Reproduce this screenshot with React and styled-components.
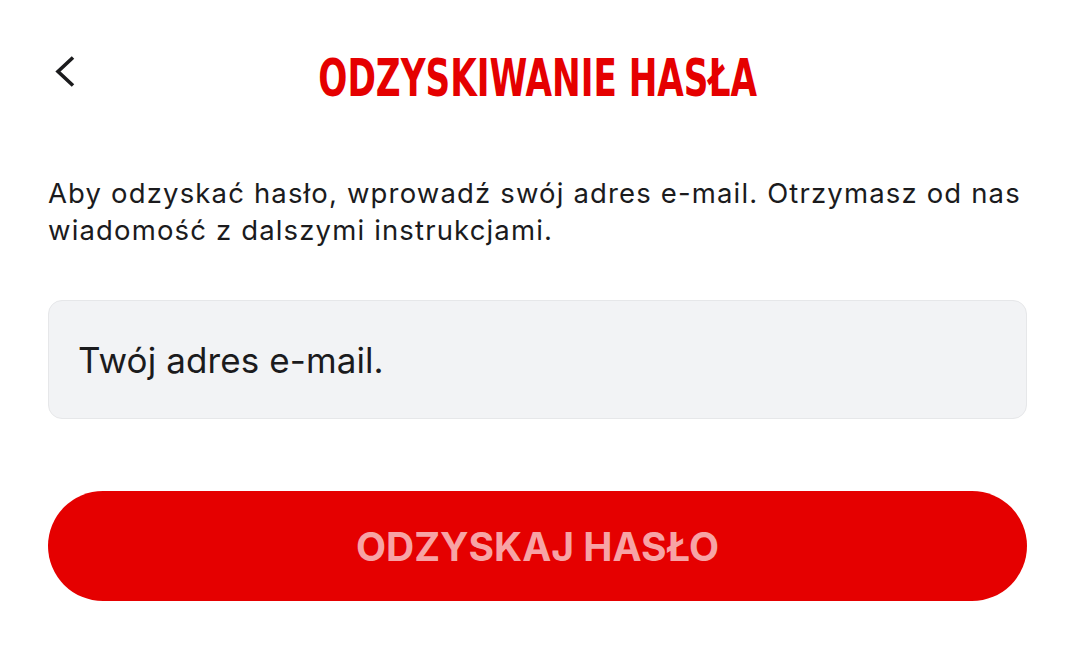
import React from 'react';
import styled, { createGlobalStyle } from 'styled-components';

const GlobalStyle = createGlobalStyle`
    html, body {
        margin: 0;
        padding: 0;
        background: #ffffff;
    }
    body {
        font-family: Inter, "Noto Sans", sans-serif;
        color: #1b1b1d;
    }
`;

const Page = styled.div`
    padding: 0 51px 0 48px;
    display: flex;
    flex-direction: column;
`;

const Header = styled.div`
    position: relative;
    height: 154px;
    display: flex;
    align-items: flex-start;
    justify-content: center;

    .back {
        position: absolute;
        left: 4px;
        top: 52px;
        background: none;
        border: 0;
        padding: 0;
        cursor: pointer;
        display: flex;
    }

    .title {
        margin: 48px 0 0;
        display: inline-block;
        font-family: "DejaVu Sans Condensed", "DejaVu Sans", sans-serif;
        font-weight: 700;
        font-size: 52px;
        line-height: 60px;
        color: #e50000;
        white-space: nowrap;
        text-transform: uppercase;
        transform: scaleX(0.732);
        transform-origin: center;
    }
`;

const Intro = styled.p`
    margin: 21px 0 0;
    font-size: 27.5px;
    line-height: 37px;
    letter-spacing: 1.15px;
    color: #1b1b1d;
`;

const Field = styled.input`
    margin-top: 51px;
    height: 119px;
    box-sizing: border-box;
    border: 1px solid #e6e7e9;
    border-radius: 14px;
    background: #f2f3f5;
    padding: 0 29px;
    font-family: Inter, "Noto Sans", sans-serif;
    font-size: 35px;
    letter-spacing: 0.1px;
    color: #1b1b1d;
    outline: none;

    &::placeholder {
        color: #1b1b1d;
        opacity: 1;
    }
`;

const SubmitButton = styled.button`
    margin-top: 72px;
    height: 110px;
    border: 0;
    border-radius: 55px;
    background: #e50000;
    color: ${props => props.disabled ? '#f7a3a5' : '#ffffff'};
    font-family: Inter, "Noto Sans", sans-serif;
    font-weight: 700;
    font-size: 39px;
    text-transform: uppercase;
`;

const BackIcon = () => (
    <svg width="26" height="38" viewBox="0 0 26 38" fill="none">
        <path d="M21 5.5 L6 19.5 L21 33.5" stroke="#1b1b1d" strokeWidth="3.6" strokeLinecap="butt" strokeLinejoin="miter" />
    </svg>
);

export default class App extends React.Component {
    render() {
        return (
            <>
                <GlobalStyle />
                <Page>
                    <Header>
                        <button className="back" aria-label="Wstecz"><BackIcon /></button>
                        <h1 className="title">Odzyskiwanie hasła</h1>
                    </Header>
                    <Intro>
                        Aby odzyskać hasło, wprowadź swój adres e-mail. Otrzymasz od nas wiadomość z dalszymi instrukcjami.
                    </Intro>
                    <Field type="email" placeholder="Twój adres e-mail." />
                    <SubmitButton disabled>Odzyskaj hasło</SubmitButton>
                </Page>
            </>
        );
    }
}
